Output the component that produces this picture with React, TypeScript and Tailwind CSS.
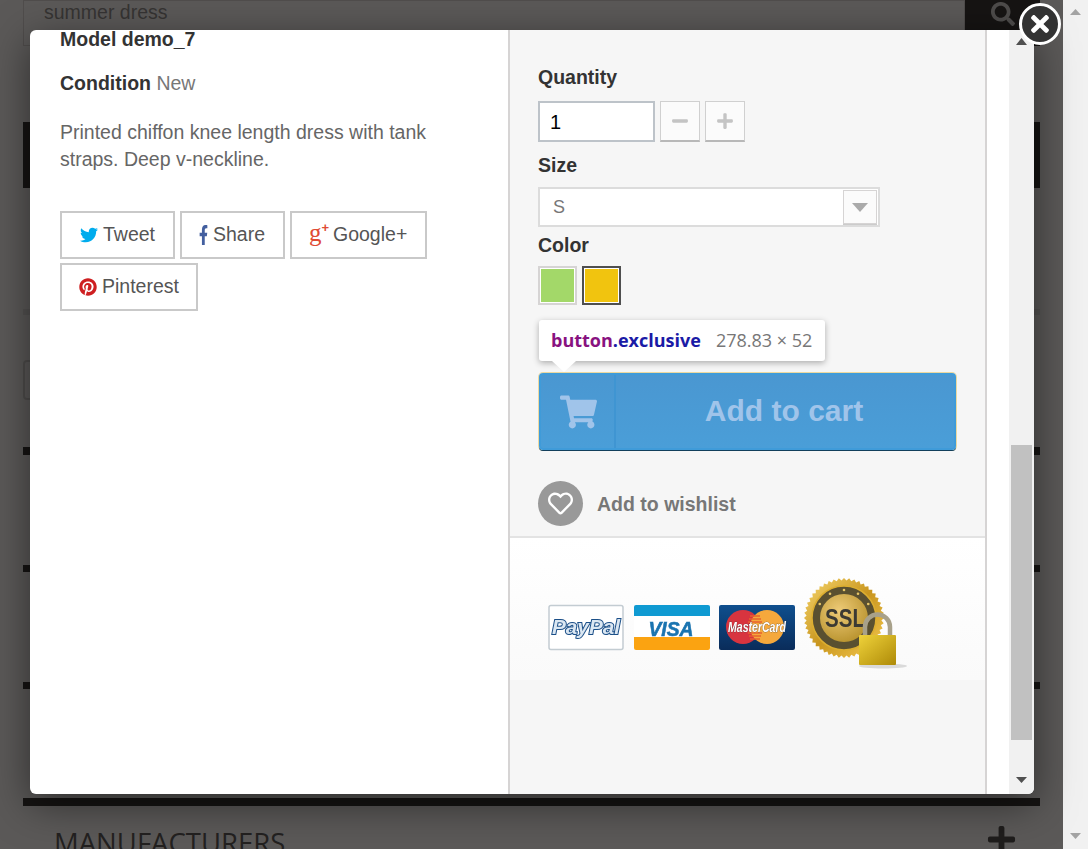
import { FaTwitter, FaFacebookF, FaPinterest, FaShoppingCart, FaRegHeart, FaSearch, FaPlus, FaMinus, FaTimes } from 'react-icons/fa'

function SocialButton({ icon, label, width }: { icon: React.ReactNode; label: string; width: string }) {
  return (
    <button className={`flex h-[48px] items-center gap-[5px] border-2 border-[#c9c9c9] bg-white pl-[17px] text-[19.5px] text-[#555] ${width}`}>
      {icon}
      {label}
    </button>
  )
}

function Swatch({ color, selected }: { color: string; selected?: boolean }) {
  return (
    <div className={`h-[39px] w-[39px] border-2 p-px bg-white ${selected ? 'border-[#4f4f4f]' : 'border-[#d6d4d4]'}`}>
      <div className="h-full w-full" style={{ backgroundColor: color }} />
    </div>
  )
}

function PayLogos() {
  const rays = Array.from({ length: 96 }, (_, i) => {
    const a = (i / 96) * Math.PI * 2
    const r = i % 2 === 0 ? 40 : 37.5
    return `${(40 + r * Math.cos(a)).toFixed(1)},${(40 + r * Math.sin(a)).toFixed(1)}`
  }).join(' ')
  const stars = [-60, -30, 0, 30, 60].map((d) => {
    const a = ((d - 90) * Math.PI) / 180
    return { x: 40 + 28 * Math.cos(a), y: 40 + 28 * Math.sin(a), key: d }
  })
  return (
    <svg width="360" height="100" viewBox="0 0 360 100" className="blur-[0.5px]">
      <defs>
        <linearGradient id="seal" x1="0" y1="0" x2="1" y2="1">
          <stop offset="0" stopColor="#f7d76f" />
          <stop offset="0.5" stopColor="#c9961f" />
          <stop offset="1" stopColor="#f6cb52" />
        </linearGradient>
        <radialGradient id="sealin" cx="0.4" cy="0.35" r="0.8">
          <stop offset="0" stopColor="#eecb78" />
          <stop offset="1" stopColor="#b08a22" />
        </radialGradient>
        <linearGradient id="lockg" x1="0" y1="0" x2="1" y2="1">
          <stop offset="0" stopColor="#efd23a" />
          <stop offset="1" stopColor="#ae8a08" />
        </linearGradient>
        <linearGradient id="mcbg" x1="0" y1="0" x2="0" y2="1">
          <stop offset="0" stopColor="#0f4f8e" />
          <stop offset="1" stopColor="#0a2c5a" />
        </linearGradient>
      </defs>
      {/* paypal */}
      <rect x="1" y="35.5" width="74" height="44" rx="2" fill="#fff" stroke="#c3ccd2" strokeWidth="1.5" />
      <text x="38" y="64" textAnchor="middle" fontFamily="Liberation Sans, sans-serif" fontWeight="700" fontStyle="italic" fontSize="20" textLength="68" lengthAdjust="spacingAndGlyphs" fill="#dbe7f2" stroke="#1b4f88" strokeWidth="2" paintOrder="stroke">PayPal</text>
      {/* visa */}
      <rect x="86" y="35" width="76" height="45" rx="2" fill="#fff" />
      <path d="M86 46v-9a2 2 0 0 1 2-2h72a2 2 0 0 1 2 2v9z" fill="#0f9ad2" />
      <path d="M86 67h76v11a2 2 0 0 1-2 2H88a2 2 0 0 1-2-2z" fill="#fba311" />
      <text x="123" y="65.5" textAnchor="middle" fontFamily="Liberation Sans, sans-serif" fontWeight="700" fontStyle="italic" fontSize="21" textLength="45" lengthAdjust="spacingAndGlyphs" fill="#1a74b0" stroke="#1a74b0" strokeWidth="0.6">VISA</text>
      {/* mastercard */}
      <rect x="171" y="35" width="76" height="45" rx="2" fill="url(#mcbg)" />
      <circle cx="195" cy="57" r="17" fill="#d8343f" />
      <circle cx="219" cy="57" r="17" fill="#f5a83c" />
      <path d="M202 46h10M201 49h12M200 52h14M200 63h14M201 66h12M202 69h10" stroke="#e8612f" strokeWidth="1.5" />
      <text x="209" y="62" textAnchor="middle" fontFamily="Liberation Sans, sans-serif" fontWeight="700" fontStyle="italic" fontSize="14" textLength="58" lengthAdjust="spacingAndGlyphs" fill="#fff" stroke="#444" strokeWidth="0.5" paintOrder="stroke">MasterCard</text>
      {/* ssl seal */}
      <g transform="translate(256 8)">
        <polygon points={rays} fill="url(#seal)" />
        <circle cx="40" cy="40" r="32" fill="#5a5030" stroke="#dcae30" strokeWidth="1.5" />
        {stars.map((s) => (
          <circle key={s.key} cx={s.x} cy={s.y} r="1.3" fill="#e6c566" />
        ))}
        <circle cx="40" cy="40" r="24" fill="url(#sealin)" />
        <text x="41" y="49" textAnchor="middle" fontFamily="Liberation Sans, sans-serif" fontWeight="700" fontSize="25" textLength="40" lengthAdjust="spacingAndGlyphs" fill="#3c3a33">SSL</text>
      </g>
      <ellipse cx="335" cy="96" rx="24" ry="2.5" fill="#ccc" opacity="0.7" />
      <path d="M317 70v-13a12.500 12.500 0 0 1 25 0v13" fill="none" stroke="#a8a18a" strokeWidth="4.5" />
      <rect x="311" y="65" width="37" height="30" rx="1" fill="url(#lockg)" />
    </svg>
  )
}

export default function App() {
  return (
    <div className="relative flex h-[849px] w-[1088px] overflow-hidden font-['Liberation_Sans',Arial,sans-serif]">
      {/* page behind the overlay */}
      <div className="w-[1063px] bg-white px-[23px]">
        <div className="flex h-[46px] items-start">
          <div className="flex h-full flex-1 items-start border border-[#d6d4d4] pl-5 text-[19.5px] leading-[22px] text-[#777]">
            summer dress
          </div>
          <div className="flex h-full w-[75px] justify-center bg-black pt-[2px]">
            <FaSearch className="h-[24px] w-[24px] text-[#d0d0d0]" />
          </div>
        </div>
        <div className="mt-[76px] h-[66px] bg-black" />
        <div className="mt-[121px] h-[6px] bg-[#e4e4e4]" />
        <div className="mt-[45px] h-[40px] w-[200px] rounded-[4px] border-2 border-[#cfcfcf]" />
        <div className="mt-[47px] h-[8px] bg-black" />
        <div className="mt-[110px] h-[7px] bg-black" />
        <div className="mt-[110px] h-[7px] bg-black" />
        <div className="mt-[109px] h-[8px] bg-black" />
        <div className="flex items-start justify-between pl-[31px] pr-[23px] pt-[19px]">
          <span className="font-['Open_Sans',sans-serif] text-[27.5px] leading-[36px] text-[#333]">MANUFACTURERS</span>
          <FaPlus className="mt-[-1px] h-[31px] w-[31px] text-[#222]" />
        </div>
      </div>
      <div className="relative flex-1 bg-[#f1f1f1]">
        <svg className="absolute left-[7px] top-[9px]" width="11" height="6" viewBox="0 0 11 6"><path d="M5.5 0L11 6H0z" fill="#a3a3a3" /></svg>
        <svg className="absolute left-[7px] top-[833px]" width="11" height="6" viewBox="0 0 11 6"><path d="M0 0h11L5.500 6z" fill="#a3a3a3" /></svg>
      </div>

      <div className="absolute inset-y-0 left-0 w-[1063px] bg-[#1e1c1a]/[0.73]" />

      {/* quick view modal */}
      <div className="absolute left-[30px] top-[30px] flex h-[764px] w-[1004px] overflow-hidden rounded-[6px] bg-white shadow-[0_10px_40px_rgba(0,0,0,0.5)]">
        <div className="w-[478px] pl-[30px] pr-[50px]">
          <p className="mt-[-3px] text-[19.5px] font-bold leading-[25px] text-[#333]">Model demo_7</p>
          <p className="mt-[19px] text-[19.5px] leading-[25px] text-[#777]">
            <span className="font-bold text-[#333]">Condition</span> New
          </p>
          <p className="mt-[23px] text-[19.5px] leading-[27px] text-[#666]">
            Printed chiffon knee length dress with tank straps. Deep v-neckline.
          </p>
          <div className="mt-[38px] flex flex-wrap gap-x-[5px] gap-y-[4px]">
            <SocialButton width="w-[115px]" icon={<FaTwitter className="ml-px h-[18px] w-[18px] text-[#00aced]" />} label="Tweet" />
            <SocialButton width="w-[105px]" icon={<FaFacebookF preserveAspectRatio="none" className="h-[20px] w-[9px] text-[#435f9f]" />} label="Share" />
            <SocialButton
              width="w-[137px]"
              icon={
                <span className="flex h-[24px] w-[19px] items-start text-[#e04b34]">
                  <span className="font-['Liberation_Serif',serif] text-[25px] leading-[20px]">g</span>
                  <span className="mt-[-2px] text-[13px] font-bold leading-[14px]">+</span>
                </span>
              }
              label="Google+"
            />
            <SocialButton width="w-[138px]" icon={<FaPinterest className="h-[18px] w-[18px] text-[#ce1f21]" />} label="Pinterest" />
          </div>
        </div>

        <div className="flex w-[479px] flex-col border-x-2 border-[#d6d4d4] bg-[#f6f6f6]">
          <div className="h-[506px] pl-[28px] pt-[35px]">
            <p className="text-[19.5px] font-bold leading-[24px] text-[#333]">Quantity</p>
            <div className="mt-[12px] flex gap-[5px]">
              <div className="flex h-[41px] w-[117px] items-center border-2 border-[#bdc3c9] bg-white pl-[10px] text-[20px] text-black">1</div>
              <button className="flex h-[41px] w-[40px] items-center justify-center border border-b-2 border-[#d0d0d0] border-b-[#b8b8b8] bg-[#fbfbfb]">
                <FaMinus className="h-[18px] w-[18px] text-[#c4c4c4]" />
              </button>
              <button className="flex h-[41px] w-[40px] items-center justify-center border border-b-2 border-[#d0d0d0] border-b-[#b8b8b8] bg-[#fbfbfb]">
                <FaPlus className="h-[18px] w-[18px] text-[#c4c4c4]" />
              </button>
            </div>
            <p className="mt-[11px] text-[19.5px] font-bold leading-[24px] text-[#333]">Size</p>
            <div className="mt-[10px] flex h-[40px] w-[342px] items-center justify-between border-2 border-[#dcdcdc] bg-white pl-[13px] pr-px text-[18px] text-[#777]">
              S
              <span className="flex h-[34px] w-[34px] items-center justify-center border border-[#d6d4d4] bg-[#fbfbfb] shadow-[0_1px_0_#ccc]">
                <svg width="16" height="9" viewBox="0 0 16 9"><path d="M0 0h16L8 9z" fill="#aaa" /></svg>
              </span>
            </div>
            <p className="mt-[6px] text-[19.5px] font-bold leading-[24px] text-[#333]">Color</p>
            <div className="mt-[9px] flex gap-[5px]">
              <Swatch color="#a3d869" />
              <Swatch color="#f1c40f" selected />
            </div>
            <button className="relative ml-px mt-[68px] flex h-[77px] w-[417px] rounded-[4px] border-2 border-[#3f9bd9] bg-gradient-to-b from-[#4a97d1] to-[#4a9ed8] text-[#a0c4ea] shadow-[0_1px_0_#123f5c,0_0_0_1px_#ecd9a0]">
              <span className="flex h-full w-[75px] items-center justify-center border-r-2 border-[#3f95d2] pl-[2px]">
                <FaShoppingCart className="h-[34px] w-[37px]" />
              </span>
              <span className="flex h-full flex-1 items-center justify-center pb-[3px] pr-[2px] text-[30px] font-bold">Add to cart</span>
            </button>
            <div className="mt-[31px] flex items-center gap-[14px]">
              <span className="flex h-[45px] w-[45px] items-center justify-center rounded-full bg-[#999]">
                <FaRegHeart className="h-[25px] w-[25px] text-white" />
              </span>
              <span className="mt-[3px] text-[19.5px] font-bold text-[#777]">Add to wishlist</span>
            </div>
          </div>
          <div className="h-[144px] border-t-2 border-[#e3e3e3] bg-gradient-to-b from-white to-[#fafafa] pl-[38px] pt-[32px]">
            <PayLogos />
          </div>
        </div>

        <div className="w-[22px] bg-white" />

        {/* modal scrollbar */}
        <div className="relative w-[25px] bg-[#f1f1f1]">
          <svg className="absolute left-[7px] top-[8px]" width="11" height="7" viewBox="0 0 11 7"><path d="M5.5 0L11 7H0z" fill="#505050" /></svg>
          <div className="absolute left-[2px] top-[415px] h-[295px] w-[21px] bg-[#c1c1c1]" />
          <svg className="absolute left-[7px] top-[747px]" width="11" height="6" viewBox="0 0 11 6"><path d="M0 0h11L5.5 6z" fill="#505050" /></svg>
        </div>
      </div>

      {/* devtools highlight tooltip */}
      <div className="absolute left-[539px] top-[320px] flex h-[41px] w-[286px] items-center rounded-[3px] bg-white pl-[12px] font-['Open_Sans',sans-serif] text-[18px] shadow-[0_2px_6px_rgba(0,0,0,0.3)]">
        <span className="font-bold text-[#881280]">button</span>
        <span className="font-bold text-[#1a1aa6]">.exclusive</span>
        <span className="ml-[15px] text-[#777]">278.83 × 52</span>
      </div>
      <div className="absolute left-[552px] top-[361px] h-0 w-0 border-x-[12px] border-t-[11px] border-x-transparent border-t-white" />

      {/* close button */}
      <button className="absolute left-[1019px] top-[3px] flex h-[42px] w-[42px] items-center justify-center rounded-full border-[3px] border-white bg-[#333]">
        <FaTimes className="h-[26px] w-[24px] text-white" />
      </button>
    </div>
  )
}
